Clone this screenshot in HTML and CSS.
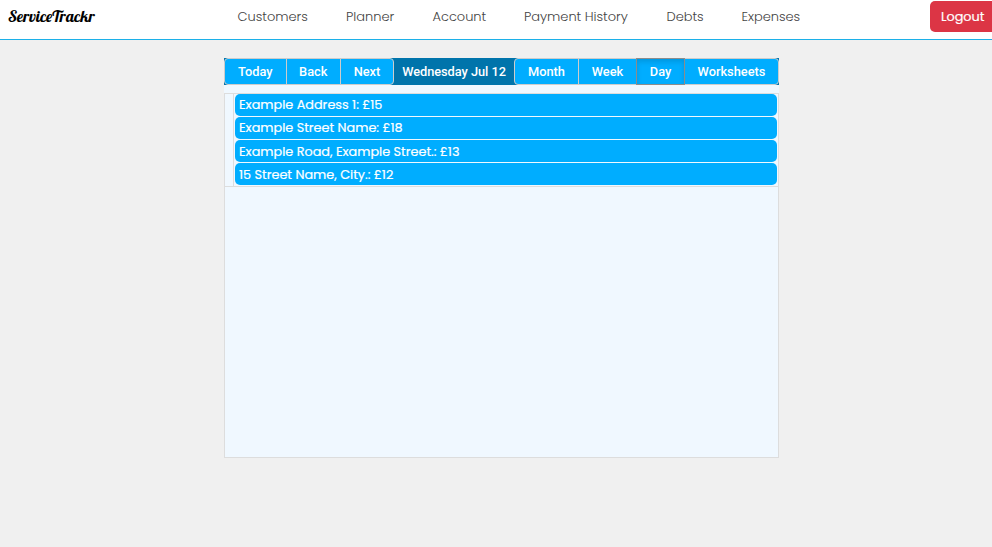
FILE: index.html
```html
<!DOCTYPE html>
<html lang="en">
<head>
<meta charset="utf-8">
<title>ServiceTrackr</title>
<link rel="stylesheet" href="styles.css">
</head>
<body>
<header class="header">
  <a class="logo">ServiceTrackr</a>
  <nav class="nav">
    <a class="customers">Customers</a><a class="planner">Planner</a><a class="account">Account</a><a class="history">Payment History</a><a class="debts">Debts</a><a class="expenses">Expenses</a>
  </nav>
  <button class="logout">Logout</button>
</header>
<main class="calendar">
  <div class="toolbar">
    <div class="group"><button class="today">Today</button><button class="back">Back</button><button class="next">Next</button></div>
    <span class="label">Wednesday Jul 12</span>
    <div class="group"><button class="month">Month</button><button class="week">Week</button><button class="day active">Day</button><button class="sheets">Worksheets</button></div>
  </div>
  <section class="view">
    <div class="allday">
      <div class="gutter"></div>
      <div class="events">
        <div class="event">Example Address 1: £15</div>
        <div class="event">Example Street Name: £18</div>
        <div class="event">Example Road, Example Street.: £13</div>
        <div class="event">15 Street Name, City.: £12</div>
      </div>
    </div>
  </section>
</main>
</body>
</html>
```
FILE: styles.css
```css
* { box-sizing: border-box; }
body { margin: 0; height: 547px; overflow: hidden; background: #f0f0f0; font-family: Poppins, Inter, sans-serif; }
button { font: inherit; margin: 0; padding: 0; cursor: pointer; }
.header { height: 40px; display: flex; align-items: flex-start; background: #fff; border-bottom: 1px solid #1cb0e8; }
.logo { width: 230px; padding-left: 8px; font: 16px/33px Lobster, "Liberation Serif", serif; color: #000; }
.nav { flex: 1; display: flex; padding-left: 7.5px; font-size: 13px; font-weight: 300; line-height: 33px; letter-spacing: -0.03px; color: #444; white-space: nowrap; }
.customers { width: 108.5px; }
.planner { width: 86.5px; }
.account { width: 91.5px; }
.history { width: 142.5px; }
.debts { width: 75px; }
.logout { width: 62px; height: 31px; margin-top: 1px; padding-left: 11px; border: 0; border-radius: 5px 0 0 5px; background: #dc3545; color: #fff; font-size: 12.8px; line-height: 31px; text-align: left; -webkit-text-stroke: 0.2px #fff; }
.calendar { width: 555px; height: 400px; margin: 18px 0 0 224px; background: #f0f8ff; }
.toolbar { height: 27px; display: flex; background: #0074ab; font: 500 12.8px/25px Roboto, sans-serif; letter-spacing: -0.04px; color: #fff; }
.group { display: flex; }
.group button { height: 27px; border: 1px solid #ccc; background: #00adff; color: #fff; margin-left: -1px; }
.group button:first-child { margin-left: 0; border-radius: 4px 0 0 4px; }
.group button:last-child { border-radius: 0 4px 4px 0; }
.group .today { width: 62.5px; }
.group .back { width: 55.5px; }
.group .next { width: 54px; }
.label { width: 121px; line-height: 27px; text-align: center; }
.group .month { width: 65px; }
.group .week { width: 59px; }
.group .day { width: 49px; }
.group .sheets { width: 95px; }
.group .active { position: relative; border-color: #8c8c8c; box-shadow: inset 0 3px 5px rgba(0,0,0,.125); }
.view { height: 365px; margin-top: 8px; border: 1px solid #ddd; }
.allday { display: flex; height: 93px; border-bottom: 1px solid #ddd; }
.gutter { width: 9px; border-right: 1px solid #ddd; }
.events { flex: 1; display: flex; flex-direction: column; gap: 1px; padding: 0 1px; }
.event { height: 22px; padding-left: 4px; border-radius: 5px; background: #00adff; color: #fff; font-size: 12.8px; line-height: 22px; white-space: nowrap; -webkit-text-stroke: 0.2px #fff; }
.event:nth-child(n+3) { line-height: 24px; }
```
